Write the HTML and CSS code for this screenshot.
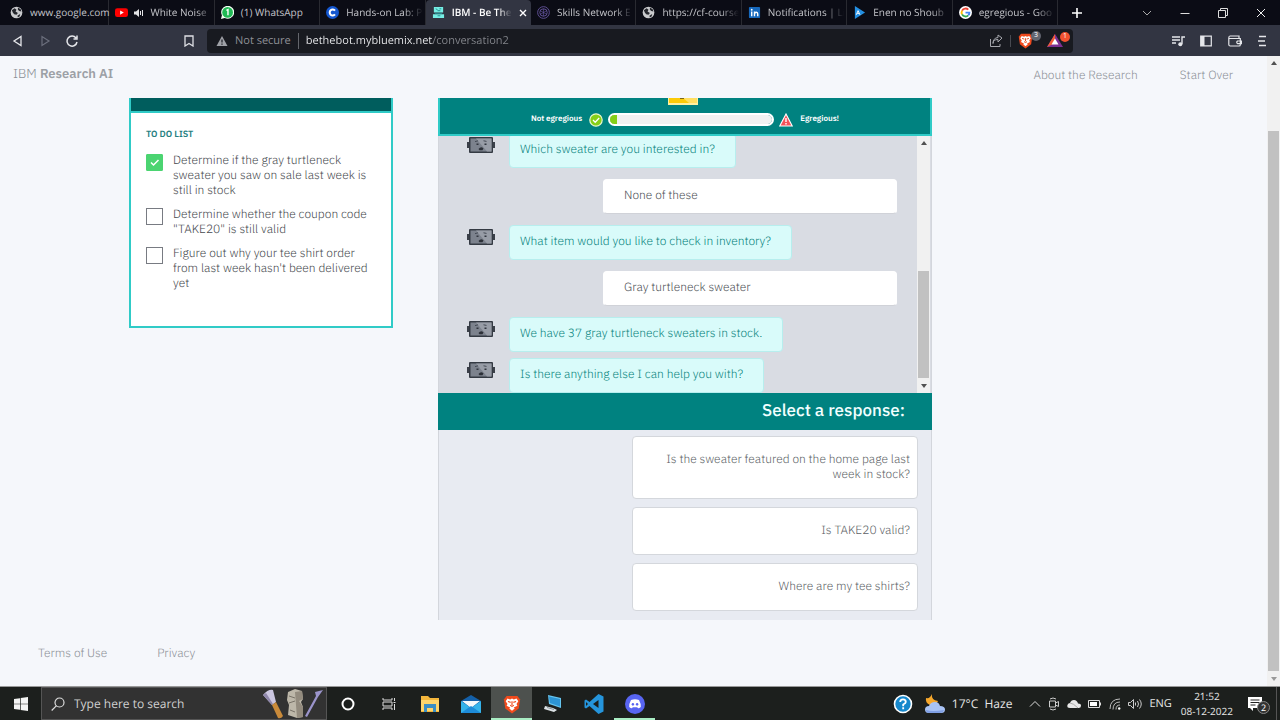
FILE: index.html
```html
<!DOCTYPE html>
<html lang="en">
<head>
<meta charset="utf-8">
<meta name="viewport" content="width=device-width, initial-scale=1">
<title>IBM - Be The Bot</title>
<link rel="stylesheet" href="styles.css">
</head>
<body>
<svg class="defs" aria-hidden="true">
  <defs>
    <symbol id="globe" viewBox="0 0 14 14"><circle cx="7" cy="7" r="6.300" fill="#c9cacd"/><path d="M2 4.500 5 2.500 7 4 6 6 8.500 7.500 7 9.500 4.500 9 3 7ZM8.500 1.500 11.500 3.500 12.300 6 10 5.500 8.500 4ZM8 10.500 11 8.500 10.500 11 8.500 12.300Z" fill="#25272d"/></symbol>
    <symbol id="bot" viewBox="0 0 28 16"><path d="M0 5h3v6H0zM25 5h3v6h-3z" fill="#3b4049"/><rect x="2" y="0" width="24" height="16" rx="1" fill="#343a43"/><rect x="3.500" y="1.500" width="21" height="13" fill="#7c828d"/><path d="M9 1.500h15.500v13H20z" fill="#979ca6"/><path d="M8 4.600l3-.8M16.500 3.800l3 .6" stroke="#444a54" fill="none"/><path d="M9.500 6.500h2v1.500h-2zM17.500 6.500h2v1.500h-2z" fill="#30353e"/><path d="M11.500 12q2.500-3 5-.5l-1 1.700h-3z" fill="#2c3038"/></symbol>
    <symbol id="lion" viewBox="0 0 20 22"><path d="M4 2h12l3 4-1.500 10L10 21.500 2.500 16 1 6z" fill="#f04a1d"/><path d="M5 5l3 1 2-1 2 1 3-1 2 3-2 3 1 2-4 2 1 1-3 2.500L7 16l1-1-4-2 1-2-2-3z" fill="#fff"/><path d="M5.500 8.200l3 1M14.500 8.200l-3 1M10 8v4M8 12.500l2 1.200 2-1.200" stroke="#f04a1d" stroke-width="1.300" fill="none"/></symbol>
  </defs>
</svg>

<header class="browser">
  <div class="tabstrip">
    <nav class="tabs" aria-label="Browser tabs">
      <button class="tab"><svg class="fav"><use href="#globe"/></svg><span class="tab-title">www.google.com</span></button>
      <button class="tab"><svg class="fav" viewBox="0 0 14 14"><rect y="2.300" width="14" height="9.600" rx="2.500" fill="#f00"/><path d="M5.500 4.800v4.500l4-2.200z" fill="#fff"/></svg><svg class="sound" viewBox="0 0 10 10"><path d="M0 3.500h2L5 1v8L2 6.500H0z" fill="#e3e3e6"/><path d="M6.500 3v4M8.500 2v6" stroke="#e3e3e6" fill="none"/></svg><span class="tab-title fade">White Noise</span></button>
      <button class="tab"><svg class="fav" viewBox="0 0 14 14"><path d="M0 14l1-4A7 7 0 1 1 4 13z" fill="#f5fff5"/><circle cx="7.100" cy="6.900" r="5.800" fill="#20b954"/><path d="M5.800 4.800 7.500 4v6" stroke="#fff" stroke-width="1.500" fill="none"/></svg><span class="tab-title">(1) WhatsApp</span></button>
      <button class="tab"><svg class="fav" viewBox="0 0 14 14"><circle cx="7" cy="7" r="7" fill="#1457d0"/><path d="M9.700 5A3.200 3.200 0 1 0 9.700 9" stroke="#fff" stroke-width="2.200" fill="none"/></svg><span class="tab-title fade">Hands-on Lab: P</span></button>
      <button class="tab active" aria-current="page"><svg class="fav" viewBox="0 0 14 14"><path d="M2 1h10v6H2zM1 9h12v4H1z" fill="#75eee4"/><path d="M4 3l2 1M8 3h2M6 5h3M3 8h8M6 10.500h3" stroke="#238e91" fill="none"/></svg><span class="tab-title fade">IBM - Be The</span><svg class="tab-close" viewBox="0 0 8 8"><path d="M1 1l6 6M7 1 1 7" stroke="#fff" stroke-width="1.400"/></svg></button>
      <button class="tab"><svg class="fav" viewBox="0 0 14 14"><g fill="none" stroke="#62529b"><circle cx="7" cy="7" r="6.300"/><circle cx="7" cy="7" r="4"/><path d="M7 3v8M3.500 5l7 4M10.500 5l-7 4" stroke-width=".7"/></g></svg><span class="tab-title fade">Skills Network E</span></button>
      <button class="tab"><svg class="fav"><use href="#globe"/></svg><span class="tab-title fade">https://cf-course</span></button>
      <button class="tab"><svg class="fav" viewBox="0 0 14 14"><rect x="1" y="1" width="12" height="12" rx="1" fill="#1769bd"/><path d="M4 6v5M7 11V6M7 8.500Q7.500 6.700 9 6.700t1.500 2V11" stroke="#fff" stroke-width="1.500" fill="none"/><circle cx="4" cy="4" r="1" fill="#fff"/></svg><span class="tab-title fade">Notifications | Li</span></button>
      <button class="tab"><svg class="fav" viewBox="0 0 14 14"><path d="M2 0l11 7L2 14z" fill="#2490e3"/><path d="M3.500 9.500 5.500 5l2 4.500M4.500 8h2" stroke="#fff" fill="none"/></svg><span class="tab-title fade">Enen no Shoub</span></button>
      <button class="tab"><svg class="fav" viewBox="0 0 14 14"><circle cx="7" cy="7" r="7" fill="#fff"/><g fill="none" stroke-width="2"><path d="M10 4A4.200 4.200 0 0 0 3.300 5" stroke="#ea4335"/><path d="M3.300 5a4.200 4.200 0 0 0 0 4" stroke="#fbbc05"/><path d="M3.300 9A4.200 4.200 0 0 0 10 10" stroke="#34a853"/><path d="M7 7.200h4.200Q11.200 9 10 10" stroke="#4285f4"/></g></svg><span class="tab-title fade">egregious - Goo</span></button>
    </nav>
    <div class="window-tools">
      <button aria-label="New tab"><svg width="12" height="12" viewBox="0 0 12 12"><path d="M6 1v10M1 6h10" stroke="#fff" stroke-width="1.600"/></svg></button>
      <button class="push" aria-label="Search tabs"><svg width="10" height="10" viewBox="0 0 10 10"><path d="M1 3l4 4 4-4" stroke="#aaa" fill="none"/></svg></button>
      <button aria-label="Minimize"><svg width="10" height="10" viewBox="0 0 10 10"><path d="M.5 5.500h9" stroke="#ddd"/></svg></button>
      <button aria-label="Restore"><svg width="10" height="10" viewBox="0 0 10 10"><path d="M.5 2.500h7v7h-7zM2.500 2V.5h7v7H8" stroke="#ddd" fill="none"/></svg></button>
      <button aria-label="Close"><svg width="10" height="10" viewBox="0 0 10 10"><path d="M1 1l8 8M9 1 1 9" stroke="#eee"/></svg></button>
    </div>
  </div>
  <div class="toolbar">
    <div class="nav-tools">
      <button aria-label="Back"><svg width="12" height="12" viewBox="0 0 12 12"><path d="M9 1.500v9L2 6z" stroke="#e5e6ea" stroke-width="1.300" fill="none"/></svg></button>
      <button aria-label="Forward"><svg width="12" height="12" viewBox="0 0 12 12"><path d="M3 1.500v9L10 6z" stroke="#6c6f7d" stroke-width="1.200" fill="none"/></svg></button>
      <button aria-label="Reload"><svg width="12" height="12" viewBox="0 0 12 12"><path d="M10 3A5 5 0 1 0 11 7M11 .5V4H7.500" stroke="#e5e6ea" stroke-width="1.500" fill="none"/></svg></button>
      <button class="push" aria-label="Bookmark"><svg width="12" height="12" viewBox="0 0 12 12"><path d="M2 1h8v10L6 8.500 2 11z" stroke="#dfe0e5" stroke-width="1.300" fill="none"/></svg></button>
    </div>
    <div class="address">
      <svg width="12" height="12" viewBox="0 0 12 12"><path d="M6 1l5.500 10H.5z" fill="#9fa1a7"/><path d="M6 4.500v3M6 8.500v1.200" stroke="#181a20" stroke-width="1.200"/></svg>
      <label class="secure" for="url">Not secure</label>
      <input id="url" class="url" type="text" value="bethebot.mybluemix.net/conversation2">
      <button aria-label="Share"><svg width="14" height="14" viewBox="0 0 14 14"><path d="M1.500 5v7.500h9.500V10M4 9.500Q4 5.500 9 5.500V8l4-4-4-3v2.500Q4 4 4 9.500z" stroke="#a5a7ad" fill="none"/></svg></button>
      <span class="rule"></span>
      <button class="badged" aria-label="Brave Shields"><svg width="15" height="17"><use href="#lion"/></svg><span class="badge grey">3</span></button>
      <button class="badged" aria-label="Brave Rewards"><svg width="16" height="15" viewBox="0 0 16 15"><path d="M8 1 0 14h16z" fill="#7c2f92"/><path d="M8 1 0 14l8-4z" fill="#f05b36"/><path d="M8 5.500 4.500 11.500h7z" fill="#fff"/></svg><span class="badge red">1</span></button>
    </div>
    <div class="side-tools">
      <button aria-label="Media"><svg width="14" height="12" viewBox="0 0 14 12"><path d="M1 2h8M1 5h8M1 8h4M11 9V2h3" stroke="#e5e6ea" stroke-width="1.400" fill="none"/><circle cx="9.300" cy="9.300" r="2" fill="#e5e6ea"/></svg></button>
      <button aria-label="Sidebar"><svg width="12" height="12" viewBox="0 0 12 12"><path d="M.7 1.200h10.600v9.600H.7z" stroke="#e5e6ea" stroke-width="1.200" fill="none"/><path d="M1 1h3.500v10H1z" fill="#e5e6ea"/></svg></button>
      <button aria-label="Wallet"><svg width="14" height="12" viewBox="0 0 14 12"><path d="M11 3V1H2Q.8 1 .8 3v6.500q0 1.500 1.500 1.500h8.700q1.300 0 1.300-1.300V3.500H1M13.500 6H9.500q-1.500 1.300 0 2.600h4z" stroke="#e5e6ea" stroke-width="1.200" fill="none"/></svg></button>
      <button aria-label="Menu"><svg width="10" height="12" viewBox="0 0 10 12"><path d="M2 1.500h7M1 6h7M2 10.500h7" stroke="#e5e6ea" stroke-width="1.400"/></svg></button>
    </div>
  </div>
</header>

<div class="viewport">
  <div class="page">
    <header class="site-header">
      <a class="brand" href="#">IBM <b>Research AI</b></a>
      <nav class="site-nav"><a href="#">About the Research</a><a href="#">Start Over</a></nav>
    </header>
    <main class="columns">
      <section class="todo">
        <div class="todo-banner"></div>
        <div class="todo-body">
          <h2>TO DO LIST</h2>
          <ul>
            <li><input type="checkbox" id="t1" checked><label for="t1">Determine if the gray turtleneck sweater you saw on sale last week is still in stock</label></li>
            <li><input type="checkbox" id="t2"><label for="t2">Determine whether the coupon code "TAKE20" is still valid</label></li>
            <li><input type="checkbox" id="t3"><label for="t3">Figure out why your tee shirt order from last week hasn't been delivered yet</label></li>
          </ul>
        </div>
      </section>
      <section class="chat">
        <div class="mood">
          <svg class="face" width="30" height="7" viewBox="0 0 30 7"><path d="M0 0h30v7H0z" fill="#fff0a0"/><path d="M1 0h28v5H1z" fill="#ffdf62"/><path d="M1 0h14l6 5H1z" fill="#fccb08"/><path d="M12 0h4v1h-4z" fill="#7d6718"/></svg>
          <div class="meter">
            <label for="mood">Not egregious</label>
            <svg width="14" height="14" viewBox="0 0 14 14"><circle cx="7" cy="7" r="6.200" fill="#86cf18" stroke="#e9f9cf" stroke-width="1.200"/><path d="M4 7l2.200 2.200L10.200 5" stroke="#fff" stroke-width="1.300" fill="none"/></svg>
            <progress id="mood" value="4" max="100"></progress>
            <svg width="14" height="14" viewBox="0 0 14 14"><path d="M7 1l6.200 12H.8z" fill="#f4525a" stroke="#fff" stroke-width="1.100"/><path d="M7 5v4M7 10v1.500" stroke="#fff" stroke-width="1.400"/></svg>
            <span>Egregious!</span>
          </div>
        </div>
        <div class="log">
          <div class="messages">
            <div class="bot"><svg class="avatar"><use href="#bot"/></svg><p>Which sweater are you interested in?</p></div>
            <p class="user">None of these</p>
            <div class="bot"><svg class="avatar"><use href="#bot"/></svg><p>What item would you like to check in inventory?</p></div>
            <p class="user">Gray turtleneck sweater</p>
            <div class="bot"><svg class="avatar"><use href="#bot"/></svg><p>We have 37 gray turtleneck sweaters in stock.</p></div>
            <div class="bot follow"><svg class="avatar"><use href="#bot"/></svg><p>Is there anything else I can help you with?</p></div>
          </div>
          <div class="scroll log-scroll"><i class="up"></i><span class="track"><span class="thumb"></span></span><i class="down"></i></div>
        </div>
        <h2 class="prompt">Select a response:</h2>
        <div class="responses">
          <button>Is the sweater featured on the home page last week in stock?</button>
          <button>Is TAKE20 valid?</button>
          <button>Where are my tee shirts?</button>
        </div>
      </section>
    </main>
    <footer class="site-footer"><a href="#">Terms of Use</a><a href="#">Privacy</a></footer>
  </div>
  <div class="scroll page-scroll"><i class="up"></i><span class="track"><span class="thumb"></span></span><i class="down"></i></div>
</div>

<footer class="taskbar">
  <button class="app" aria-label="Start"><svg width="14" height="14" viewBox="0 0 14 14"><path d="M0 2l6-.8v5.500H0zM6.700 1.100 14 0v6.700H6.700zM0 7.300h6v5.500L0 12zM6.700 7.300H14V14l-7.300-1.100z" fill="#f4f4f4"/></svg></button>
  <div class="search">
    <svg width="14" height="14" viewBox="0 0 14 14"><circle cx="8.500" cy="5.500" r="4.500" stroke="#ddd" stroke-width="1.200" fill="none"/><path d="M5.500 8.700.7 13.500" stroke="#ddd" stroke-width="1.200"/></svg>
    <input type="text" aria-label="Search" placeholder="Type here to search">
    <svg width="62" height="30" viewBox="0 0 62 30"><path d="M1 6q5-6 10-5l3 12-4 3z" fill="#cbc6e0"/><path d="M1 6l3-2 7 11-1 1z" fill="#8f87aa"/><path d="M10 16l4-3 7 14q-2 3-5 2z" fill="#c98a3a"/><path d="M26 3l7-3 7 2 1 8-2 3 2 5v10l-6 1-9-3 1-10-2-5z" fill="#bdb7a9"/><path d="M33 3l7-1 1 8-4 2 4 6v10l-6 1z" fill="#938b7e"/><path d="M27 7l6 2M27 14l6-2M28 21l5 2" stroke="#777167"/><path d="M53 3l8-2-5 7-11 20-2-1 11-20z" fill="#9b94cb"/></svg>
  </div>
  <button class="app" aria-label="Cortana"><svg width="14" height="14" viewBox="0 0 14 14"><circle cx="7" cy="7" r="5.500" stroke="#fff" stroke-width="2" fill="none"/></svg></button>
  <button class="app" aria-label="Task view"><svg width="14" height="14" viewBox="0 0 14 14"><path d="M1 1v2h9V1M1 13v-2h9v2M1 5h9v4H1zM12.500 1v3M12.500 7v6M11.500 5.500h2" stroke="#ddd" fill="none"/></svg></button>
  <button class="app" aria-label="File Explorer"><svg width="20" height="18" viewBox="0 0 20 18"><path d="M1 1h7l2 2h9v14H1z" fill="#f3b63c"/><path d="M1 5h18v11H1z" fill="#ffd66b"/><path d="M4 9h12v8h-3v-4H7v4H4z" fill="#3b8fc4"/></svg></button>
  <button class="app" aria-label="Mail"><svg width="20" height="18" viewBox="0 0 20 18"><path d="M0 6 10 0l10 6v12H0z" fill="#1460a8"/><path d="M1 6h18l-9 7z" fill="#f4f8fb"/><path d="M0 6l10 7 10-7v12H0z" fill="#35b3ea"/><path d="M0 18l10-7 10 7z" fill="#1d8bd8"/></svg></button>
  <button class="app current open" aria-label="Brave"><svg width="18" height="20"><use href="#lion"/></svg></button>
  <button class="app" aria-label="Remote desktop"><svg width="20" height="18" viewBox="0 0 20 18"><path d="M5 0l13 3v10L6 9z" fill="#66c5ef"/><path d="M6 1.500 17 4v7.500L7 8z" fill="#2c94d4"/><path d="M2 11l8 2 4 2-3 2-10-3z" fill="#dde3e6"/><path d="M4 12.500l7 2" stroke="#8a9499"/></svg></button>
  <button class="app" aria-label="Code"><svg width="20" height="20" viewBox="0 0 20 20"><path d="M14.500 0 19.500 2.400v15.200L14.500 20 5.500 12 2 14.500.5 13.500v-7L2 5.500 5.500 8zM14.500 6 9 10l5.500 4zM2 8v4l2-2z" fill="#2595dc" fill-rule="evenodd"/></svg></button>
  <button class="app open" aria-label="Discord"><svg width="20" height="20" viewBox="0 0 20 20"><circle cx="10" cy="10" r="10" fill="#5865f2"/><path d="M6 6q4-1.300 8 0 2 3.500 1.800 7Q14 14.500 13 14.300l-.8-1.100H7.800L7 14.300q-1 .2-2.800-1.300Q4 9.500 6 6z" fill="#fff"/><ellipse cx="7.900" cy="10.300" rx="1.200" ry="1.400" fill="#5865f2"/><ellipse cx="12.100" cy="10.300" rx="1.200" ry="1.400" fill="#5865f2"/></svg></button>
  <div class="tray">
    <button aria-label="Help"><svg width="20" height="20" viewBox="0 0 20 20"><circle cx="10" cy="10" r="8.500" fill="#1688cc" stroke="#fff" stroke-width="1.600"/><path d="M7.200 8Q7.200 5.400 10 5.400T12.800 8Q12.800 9.300 10.200 10.500v1.700M10.200 13.300v2" stroke="#fff" stroke-width="1.800" fill="none"/></svg></button>
    <button class="weather"><svg width="22" height="20" viewBox="0 0 22 20"><path d="M8 0q-1 6 6 7-2 5-8 4-5-2-4-7 4 1 6-4z" fill="#f5a72c"/><path d="M5 19q-4 0-4-3.500T5 12q1.500-4 6-4 4 0 5 4 5 0 5 3.500T17 19z" fill="#a9c3f5"/><path d="M2 16q6 2 18 0-1 3-4 3H5q-3 0-3-3z" fill="#7f9fe3"/></svg><span>17°C&nbsp; Haze</span></button>
    <button aria-label="Show hidden icons"><svg width="12" height="12" viewBox="0 0 12 12"><path d="M1 8.500l5-5 5 5" stroke="#ddd" fill="none"/></svg></button>
    <button aria-label="Meet now"><svg width="12" height="14" viewBox="0 0 12 14"><path d="M1.500 4h6v6h-6zM7.500 6l3-1.500v5L7.500 8M2 2q3-2 6 0M2 12q3 2 6 0" stroke="#ccc" fill="none"/></svg></button>
    <button aria-label="OneDrive"><svg width="14" height="10" viewBox="0 0 14 10"><path d="M3 9Q0 9 .3 6.500T3 4Q4 1 7 1t4 3.500q3 0 3 2.300T11.500 9z" fill="#e8e8e8"/><path d="M3 4q3 0 8 5" stroke="#aaa" fill="none"/></svg></button>
    <button aria-label="Battery"><svg width="14" height="10" viewBox="0 0 14 10"><path d="M.5 1.500h11v7H.5zM12.500 3.500v3" stroke="#ddd" fill="none"/><path d="M2 3h7v4H2z" fill="#fff"/></svg></button>
    <button aria-label="Network"><svg width="12" height="12" viewBox="0 0 12 12"><path d="M1 11Q1 1 11 1M4 11.500Q4 4 11 4M7 11.500Q7 7 11 7" stroke="#bbb" fill="none"/><circle cx="10.200" cy="10.500" r="1.200" fill="#fff"/></svg></button>
    <button aria-label="Volume"><svg width="14" height="12" viewBox="0 0 14 12"><path d="M.5 4.500h2l3-3v9l-3-3h-2zM7.500 4.500v3M9.500 3q2 3 0 6M11.500 1.500q3.500 4.500 0 9" stroke="#ccc" fill="none"/></svg></button>
    <button>ENG</button>
    <button class="clock"><span>21:52</span><span>08-12-2022</span></button>
    <button class="badged notes" aria-label="Notifications"><svg width="14" height="14" viewBox="0 0 14 14"><path d="M0 0h14v11H5v3l-3-3H0z" fill="#fff"/><path d="M2.500 3h9M2.500 5.500h9M2.500 8h5" stroke="#222"/></svg><span class="badge count">2</span></button>
    <span class="peek"></span>
  </div>
</footer>
</body>
</html>
```

FILE: styles.css
```css
* { box-sizing: border-box; }
body {
  margin: 0;
  min-height: 100vh;
  display: flex;
  flex-direction: column;
  background: #f5f7fb;
  color: #45484d;
  font: 12px/15px "IBM Plex Sans", "Noto Sans", sans-serif;
  text-rendering: geometricPrecision;
}
button, input { font: inherit; color: inherit; text-rendering: inherit; }
button { border: 0; padding: 0; background: none; display: flex; align-items: center; justify-content: center; }
a { color: inherit; text-decoration: none; }
h2, p, ul { margin: 0; padding: 0; }
svg { flex: none; display: block; }
.defs { position: absolute; width: 0; height: 0; }
.push { margin-left: auto; }

/* browser frame */
.browser { font-family: "Segoe UI", "Open Sans", sans-serif; font-size: 11px; }
.tabstrip { display: flex; height: 25px; background: #0b0c15; }
.tabs { display: flex; flex: 1; min-width: 0; padding-left: 4px; }
.tab { flex: 1 1 0; min-width: 0; justify-content: flex-start; gap: 7px; padding: 0 3px 0 6px; color: #c4c5ca; font-size: 10px; box-shadow: inset -1px 0 #292a31; }
.tab.active { background: #323542; color: #fff; border-radius: 4px 4px 0 0; box-shadow: none; }
.tab.active .tab-title { font-weight: 600; }
.tab-title { flex: 1; min-width: 0; white-space: nowrap; text-align: left; }
.fade { mask-image: linear-gradient(90deg, #000 75%, transparent); }
.fav { width: 13px; height: 13px; }
.sound { width: 10px; height: 10px; margin: 0 -1px; }
.tab-close { width: 8px; height: 8px; margin-right: 1px; }
.window-tools { display: flex; flex: 0 0 222px; }
.window-tools button { width: 38px; }
.toolbar { display: flex; align-items: center; height: 31px; background: #323542; }
.nav-tools { display: flex; gap: 15px; flex: 0 0 207px; padding: 0 12px 0 12px; }
.address { flex: 1; display: flex; align-items: center; gap: 7px; height: 24px; padding: 0 4px 0 9px; background: #181a20; border-radius: 4px; }
.secure { color: #8e9096; }
.url { flex: 1; min-width: 0; height: 16px; border: 0; border-left: 1px solid #64666c; padding: 0 0 0 7px; outline: 0; background: linear-gradient(90deg, #f1f2f4 134px, #85878d 134px); background-clip: text; -webkit-background-clip: text; -webkit-text-fill-color: transparent; }
.rule { width: 1px; height: 12px; background: #484a51; }
.badged { position: relative; width: 22px; justify-content: flex-start; }
.badge { position: absolute; top: -1px; right: -1px; width: 10px; height: 10px; border-radius: 50%; color: #fff; font-size: 7px; line-height: 10px; text-align: center; }
.badge.grey { background: #62656f; }
.badge.red { background: #f1512f; }
.side-tools { display: flex; justify-content: space-between; flex: 0 0 207px; padding: 0 13px 0 98px; }

/* scrollbars */
.scroll { display: flex; flex-direction: column; align-items: center; flex: 0 0 13px; background: #f1f1f1; }
.scroll .track { flex: 1; align-self: stretch; padding: 0 1px; display: flex; flex-direction: column; justify-content: flex-end; }
.thumb { background: #c1c1c1; }
.up, .down { width: 0; height: 0; border: 3px solid transparent; margin: 2px 0 6px; border-bottom: 4px solid #505050; }
.down { border-bottom-color: transparent; border-bottom-width: 0; border-top: 4px solid #505050; margin: 6px 0 5px; }
.log-scroll .thumb { height: 47%; }
.page-scroll .thumb { height: 90%; }
.page-scroll .down { border-top-color: #999; }

/* page */
.viewport { flex: 1; display: flex; }
.page { flex: 1; display: flex; flex-direction: column; font-weight: 300; }
.site-header { display: flex; justify-content: space-between; align-items: center; height: 42px; padding: 0 34px 4px 13px; color: #8b8f96; }
.brand { font-size: 13px; padding-bottom: 4px; }
.brand b { font-weight: 600; color: #9ca0a6; }
.site-nav { display: flex; gap: 42px; }
.columns { display: grid; grid-template-columns: 264px 494px; gap: 45px; padding-left: 129px; align-items: start; }
.todo { background: #fff; border: 2px solid #30cbc7; border-top: 0; }
.todo-banner { height: 15px; background: #005d5d; border-bottom: 2px solid #30cbc7; }
.todo-body { padding: 14px 16px 35px 15px; }
.todo h2 { color: #26807f; font-size: 9px; line-height: 15px; font-weight: 600; }
.todo ul { list-style: none; display: grid; gap: 9px; padding-top: 11px; }
.todo li { display: flex; align-items: flex-start; gap: 10px; }
.todo input { appearance: none; flex: none; width: 17px; height: 17px; margin: 1px 0 0; border: 1px solid #787b82; background: #fff; }
.todo input:checked { border-color: #4bd471; border-radius: 1px; background: #4bd471 url("data:image/svg+xml,%3Csvg xmlns='http://www.w3.org/2000/svg' viewBox='0 0 15 15'%3E%3Cpath d='M4 7.500l2.500 2.500 5-5' fill='none' stroke='white' stroke-width='1.500'/%3E%3C/svg%3E"); }

.chat { border: solid #d3d6dc; border-width: 0 1px; background: #e8ebf2; }
.mood { display: flex; flex-direction: column; align-items: center; margin: 0 -1px; border: solid #30cbc7; border-width: 0 2px 2px; background: #008280; color: #fff; height: 38px; }
.face { height: 7px; margin-right: 4px; }
.meter { display: flex; align-items: center; gap: 5px; padding-top: 7px; font-size: 8px; font-weight: 600; line-height: 15px; }
.meter label { margin-right: 2px; }
.meter span { margin-left: 2px; }
progress { appearance: none; width: 166px; height: 13px; border: 2px solid #fff; border-radius: 7px; overflow: hidden; background: #f1f1f1; }
progress::-webkit-progress-bar { background: #f1f1f1; }
progress::-webkit-progress-value { background: #86cf18; }
.log { display: flex; background: #d9dce3; height: 257px; padding-right: 1px; }
.messages { flex: 1; display: flex; flex-direction: column; justify-content: flex-end; gap: 11px; overflow: hidden; padding-left: 28px; }
.messages p { flex: none; line-height: 15px; padding: 8px 20px 10px 10px; border: 1px solid #b7eeee; border-radius: 4px; background: #d9fbfa; color: #07837c; }
.bot { display: flex; gap: 14px; align-items: flex-start; }
.bot.follow { margin-top: -5px; }
.avatar { width: 28px; height: 16px; margin-top: 4px; }
.messages .user { width: 294px; align-self: flex-end; margin-right: 20px; padding-left: 20px; background: #fff; color: #4c4f55; border-color: #fff #fff #d0d2d8; }
.prompt { height: 37px; padding: 0 27px 4px; margin: 0 -1px; display: flex; align-items: center; justify-content: flex-end; background: #008280; color: #f2ffff; font-size: 17px; line-height: 22px; font-weight: 500; }
.responses { display: flex; flex-direction: column; align-items: flex-end; gap: 8px; padding: 6px 13px 9px; }
.responses button { width: 286px; padding: 15px 7px 16px; justify-content: flex-end; text-align: right; border: 1px solid #d4d7dc; border-radius: 4px; background: #fff; color: #5c5f66; }
.site-footer { display: flex; gap: 50px; padding: 26px 38px 20px; color: #8b8f96; }

/* taskbar */
.taskbar { display: flex; height: 34px; background: #1c1f1d; border-top: 1px solid #999; color: #e6e6e6; font-family: "Segoe UI", "Open Sans", sans-serif; }
.app { flex: 0 0 41px; border: solid transparent; border-width: 2px 0; }
.app.current { background-color: #4d514e; border-top-color: #4d514e; }
.app.open { border-bottom-color: #a9edc4; }
.search { flex: 0 0 286px; display: flex; align-items: center; gap: 9px; padding: 0 2px 0 9px; border: 1px solid #555; background: #323232; }
.search input { flex: 1; min-width: 0; border: 0; padding: 0; background: none; }
.search input::placeholder { color: #d0d0d0; opacity: 1; }
.tray { margin-left: auto; display: flex; align-items: center; gap: 7px; padding-right: 3px; font-size: 11px; }
.weather { gap: 6px; padding: 0 10px 0 4px; font-size: 12px; }
.clock { flex-direction: column; font-size: 10px; margin: 0 8px 0 2px; }
.notes { width: 20px; }
.notes .badge { top: 4px; right: -2px; width: 13px; height: 13px; line-height: 11px; border: 1px solid #888; background: #333; font-size: 9px; }
.peek { align-self: stretch; width: 1px; margin-left: 1px; background: #555; }
```
